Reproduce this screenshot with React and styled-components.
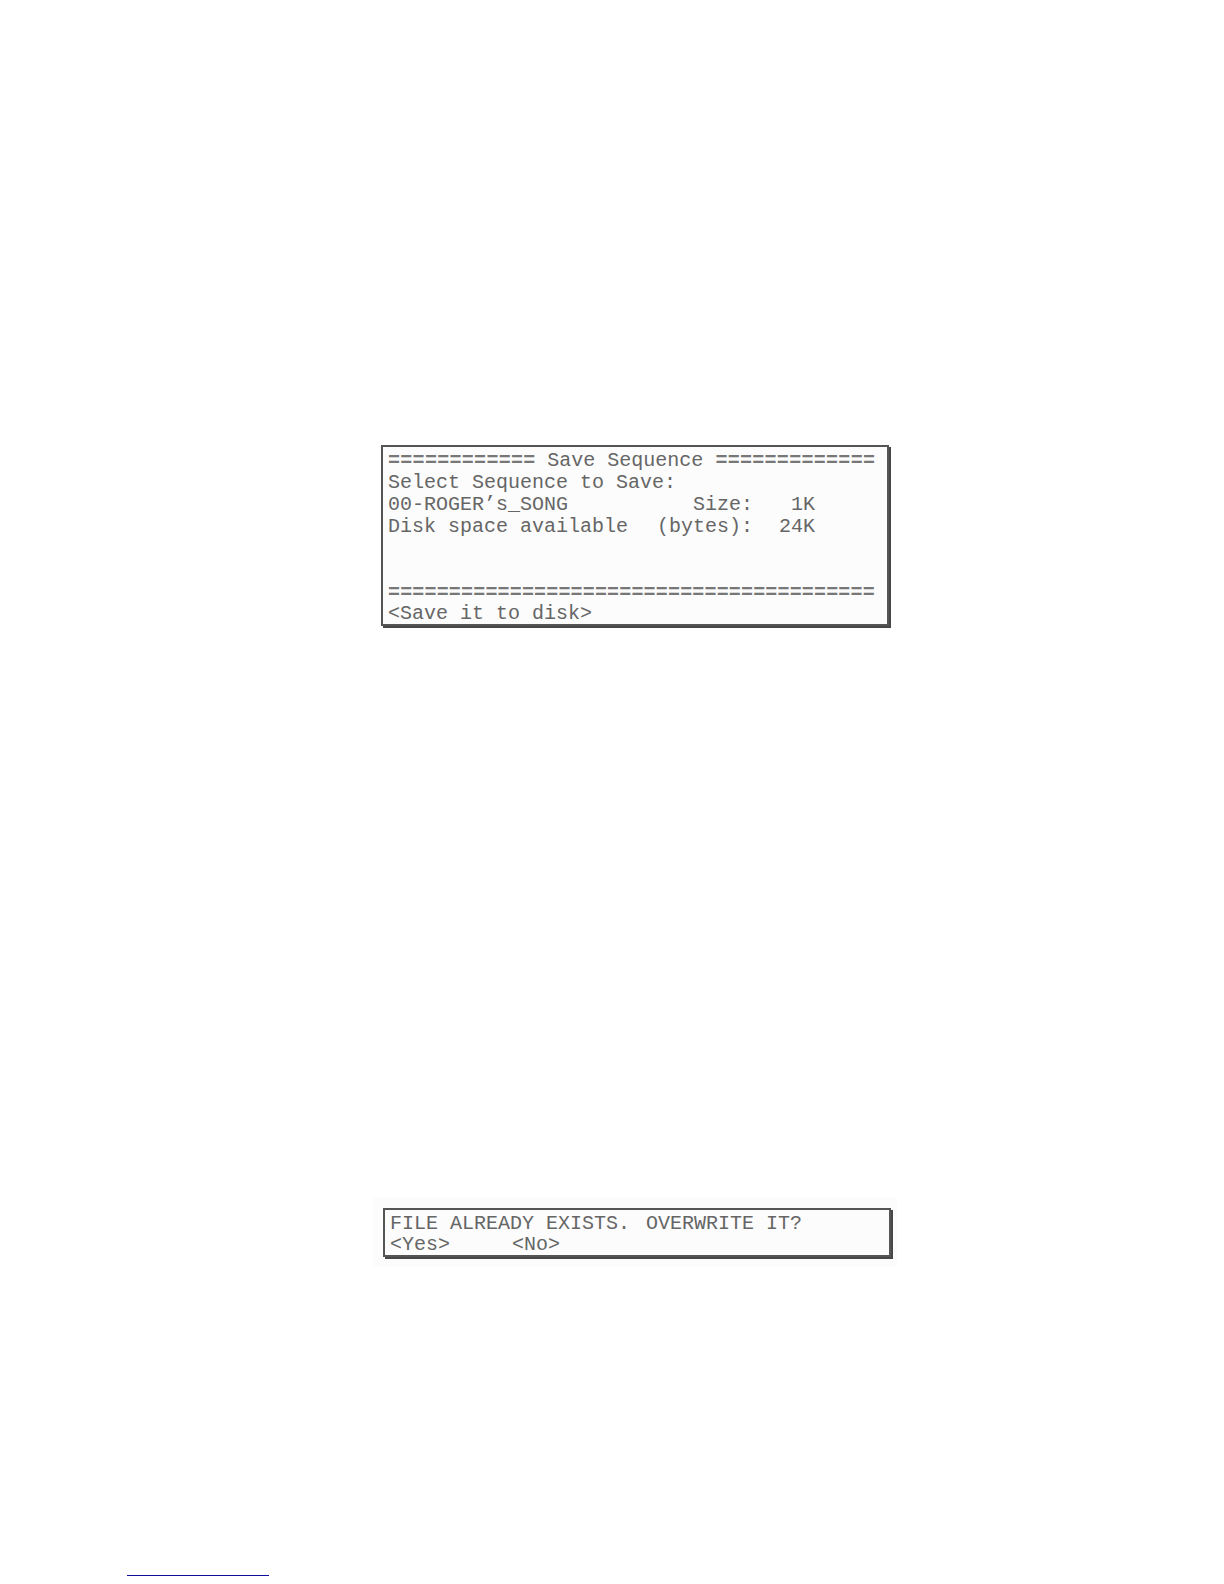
import React, { useState } from 'react'
import styled, { createGlobalStyle } from 'styled-components'

const RULE_LENGTH = 40

const SEQUENCE = { name: '00-ROGER’s_SONG', size: '1K' }

const DISK_SPACE = '24K'

const Rule = ({ length, grow }) => (
  <RuleWrapper $grow={grow}>
    {Array.from({ length }, (_, i) => <span key={i}>=</span>)}
  </RuleWrapper>
)

const SaveDialog = ({ isSelected, onSelect }) => (
  <Panel role="dialog" aria-labelledby="save-title">
    <TitleRow>
      <Rule length={12} grow={12} />
      <Title id="save-title">Save Sequence</Title>
      <Rule length={13} grow={13} />
    </TitleRow>
    <Row>Select Sequence to Save:</Row>
    <InfoRow>
      <TextButton type="button" aria-pressed={isSelected} onClick={onSelect}>
        {SEQUENCE.name}
      </TextButton>
      <span>Size:</span>
      <Value>{SEQUENCE.size}</Value>
    </InfoRow>
    <InfoRow>
      <span>Disk space available</span>
      <span>(bytes):</span>
      <Value>{DISK_SPACE}</Value>
    </InfoRow>
    <Row />
    <Row />
    <Rule length={RULE_LENGTH} />
    <Actions>
      <TextButton type="button">&lt;Save it to disk&gt;</TextButton>
    </Actions>
  </Panel>
)

const OverwriteDialog = () => (
  <Backdrop>
    <Panel role="alertdialog" aria-labelledby="overwrite-title">
      <Prompt id="overwrite-title">
        <span>FILE ALREADY EXISTS.</span>
        <span>OVERWRITE IT?</span>
      </Prompt>
      <Actions>
        <TextButton type="button">&lt;Yes&gt;</TextButton>
        <TextButton type="button">&lt;No&gt;</TextButton>
      </Actions>
    </Panel>
  </Backdrop>
)

const App = () => {

  const [isSelected, setIsSelected] = useState(true)

  return (
    <Page>
      <GlobalStyle />
      <SaveDialog isSelected={isSelected} onSelect={() => setIsSelected(!isSelected)} />
      <OverwriteDialog />
      <FooterLink href="#top" aria-label="Top of page" />
    </Page>
  )
}

const GlobalStyle = createGlobalStyle`
  * {
    box-sizing: border-box;
  }

  body {
    margin: 0;
    background: #ffffff;
  }
`

const Page = styled.main`
  display: flex;
  flex-direction: column;
  align-items: center;
  padding: 445px 0 8px 46px;
  color: #666666;
  font-family: "Liberation Mono", "Courier New", monospace;
  font-size: 20px;
  line-height: 22px;
`

const Panel = styled.section`
  width: 100%;
  max-width: 508px;
  padding: 3px 12px 0 5px;
  border: 2px solid #555555;
  background: #fcfcfc;
  box-shadow: 2px 2px 0 #484848;
`

const Backdrop = styled.div`
  width: 100%;
  max-width: 524px;
  margin-top: 572px;
  padding: 10px 6px 10px 10px;
  background: #fcfcfc;
`

const Row = styled.div`
  min-height: 22px;
`

const TitleRow = styled.div`
  display: flex;
  gap: 12px;
`

const Title = styled.h1`
  margin: 0;
  font-size: 20px;
  font-weight: normal;
  line-height: 22px;
`

const RuleWrapper = styled.div`
  display: flex;
  flex: ${({ $grow }) => $grow || 'none'};
  justify-content: space-between;
  color: #777777;
  font-weight: bold;
`

const InfoRow = styled.div`
  display: grid;
  grid-template-columns: 1fr auto 62px;
  padding-right: 60px;
`

const Value = styled.span`
  text-align: right;
`

const Prompt = styled.div`
  display: flex;
  gap: 16px;
`

const Actions = styled.div`
  display: flex;
  gap: 62px;
  line-height: 20px;
`

const TextButton = styled.button`
  padding: 0;
  border: none;
  background: none;
  color: inherit;
  font: inherit;
  text-align: left;
  cursor: pointer;

  &:hover {
    color: #222222;
  }
`

const FooterLink = styled.a`
  align-self: flex-start;
  width: 142px;
  margin: 308px 0 0 81px;
  border-bottom: 1px solid #10109c;
`

export default App
